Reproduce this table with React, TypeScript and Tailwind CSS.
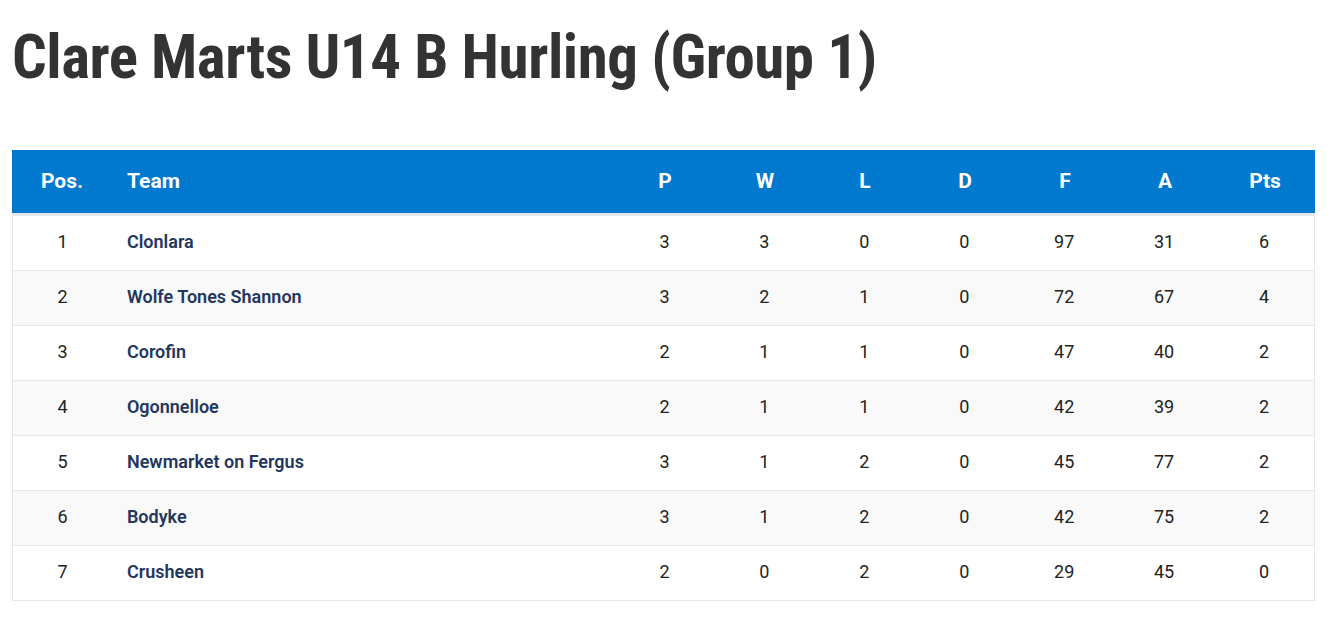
const rows = [
  { pos: 1, team: "Clonlara", p: 3, w: 3, l: 0, d: 0, f: 97, a: 31, pts: 6 },
  { pos: 2, team: "Wolfe Tones Shannon", p: 3, w: 2, l: 1, d: 0, f: 72, a: 67, pts: 4 },
  { pos: 3, team: "Corofin", p: 2, w: 1, l: 1, d: 0, f: 47, a: 40, pts: 2 },
  { pos: 4, team: "Ogonnelloe", p: 2, w: 1, l: 1, d: 0, f: 42, a: 39, pts: 2 },
  { pos: 5, team: "Newmarket on Fergus", p: 3, w: 1, l: 2, d: 0, f: 45, a: 77, pts: 2 },
  { pos: 6, team: "Bodyke", p: 3, w: 1, l: 2, d: 0, f: 42, a: 75, pts: 2 },
  { pos: 7, team: "Crusheen", p: 2, w: 0, l: 2, d: 0, f: 29, a: 45, pts: 0 },
];

const cols = ["P", "W", "L", "D", "F", "A", "Pts"];

const App = () => {
  return (
    <div className="w-full min-h-screen bg-white font-['Roboto',sans-serif] text-[#333]">
      {/* page title */}
      <h1 className="pl-[12px] pt-[21px] text-[61px] font-bold leading-[72px] font-stretch-condensed tracking-[-0.45px] text-[#333]">
        Clare Marts U14 B Hurling (Group 1)
      </h1>

      {/* league table */}
      <div className="mx-[12px] mt-[57px] w-[1303px]">
        <div className="flex h-[63px] items-center bg-[#0079cf] text-[21px] font-bold text-white border-b-[3px] border-[#e4e7eb] box-content">
          <div className="w-[100px] text-center">Pos.</div>
          <div className="w-[503px] pl-[15px]">Team</div>
          {cols.map((c) => (
            <div key={c} className="w-[100px] text-center">
              {c}
            </div>
          ))}
        </div>

        <div className="border-x border-[#e6e6e6]">
          {rows.map((r, i) => (
            <div
              key={r.pos}
              className={
                "flex h-[55px] items-center border-b border-[#e6e6e6] text-[18px] " +
                (i % 2 === 1 ? "bg-[#f9f9f9]" : "bg-white")
              }
            >
              <div className="w-[99px] text-center text-[#222] pb-[4px]">{r.pos}</div>
              <div className="w-[503px] pl-[15px] font-semibold text-[#23375e] pb-[4px]">{r.team}</div>
              {[r.p, r.w, r.l, r.d, r.f, r.a, r.pts].map((v, j) => (
                <div key={j} className="w-[100px] text-center text-[#222] pb-[4px]">
                  {v}
                </div>
              ))}
            </div>
          ))}
        </div>
      </div>
    </div>
  );
};

export default App;
